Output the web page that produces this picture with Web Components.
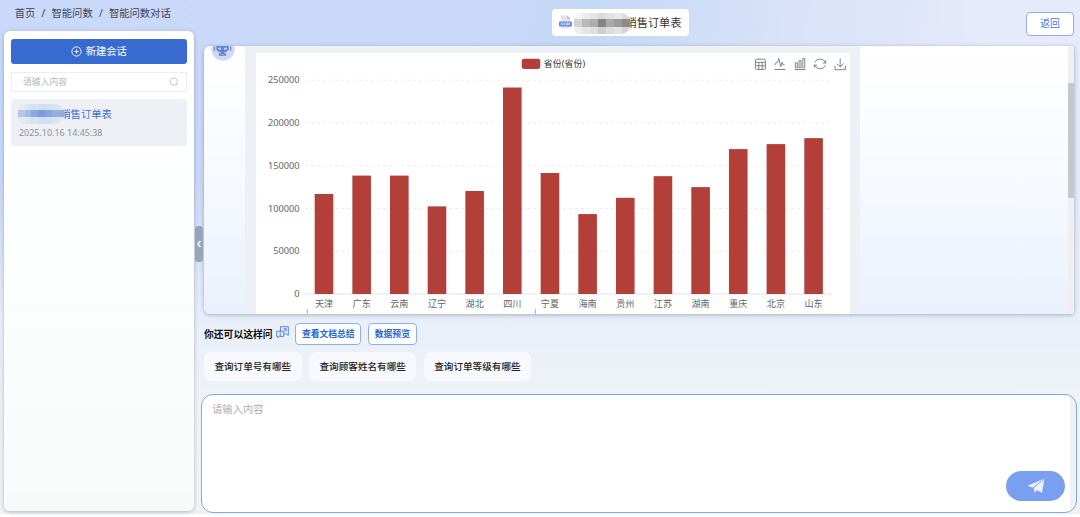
<!DOCTYPE html>
<html lang="zh-CN">
<head>
<meta charset="utf-8">
<title>智能问数对话</title>
<style>
  html, body {
    margin: 0;
    height: 100%;
    overflow: hidden;
    background: #fff;
  }
  body {
    font-family: "Noto Sans", "Noto Sans CJK SC", sans-serif;
    color: #333;
  }
</style>
</head>
<body>
<data-chat-app></data-chat-app>

<script>
const define = (name, html, setup) => {
  customElements.define(name, class extends HTMLElement {
    constructor() {
      super();
      this.root = this.attachShadow({ mode: 'open' });
      this.root.innerHTML = html;
    }

    connectedCallback() {
      if (setup) setup(this, this.root);
    }
  });
};

define('bread-crumb', `
  <style>
    :host {
      display: flex;
      gap: 6.2px;
      height: 31px;
      padding-left: 10.7px;
      box-sizing: border-box;
      font-size: 10.3px;
      line-height: 26px;
      white-space: nowrap;
      color: #3d4454;
    }
  </style>
  <span>首页</span><span>/</span><span>智能问数</span><span>/</span><span>智能问数对话</span>
`);

// Strip of grey or blue tiles that hides the customer's name
define('name-mask', `
  <style>
    :host {
      display: grid;
      grid-template-columns: repeat(7, 1fr);
      grid-template-rows: 1fr 1.1fr 1fr;
      border-radius: 5px 10px 10px 6px;
      overflow: hidden;
    }
  </style>
`, (host, root) => {
  const tones = {
    blue: ['#e5ebf4', '#dbe5f3', '#d5e0f2', '#d1ddf1', '#d4dff1', '#d9e3f2', '#dfe6f1',
           '#b3c9ec', '#9fbbe8', '#88a9e0', '#7b9fdd', '#85a6df', '#91afe2', '#92aee0',
           '#e5eaf2', '#dee6f2', '#d6e1f1', '#d4dff0', '#d3def0', '#dae3f1', '#e2e8f1'],
    grey: ['#f6f6f6', '#ececec', '#e5e5e5', '#dadada', '#e2e2e2', '#e9e9e9', '#dddddd',
           '#d2d2d2', '#b8b8b8', '#adadad', '#858585', '#a9a9a9', '#9b9b9b', '#8b8b8b',
           '#eeeeee', '#e4e4e4', '#dfdfdf', '#cfcfcf', '#dbdbdb', '#e3e3e3', '#d5d5d5']
  };
  tones[host.getAttribute('tone')].forEach(color => {
    const tile = document.createElement('i');
    tile.style.background = color;
    root.append(tile);
  });
});

define('session-item', `
  <style>
    :host {
      display: block;
      height: 47.5px;
      box-sizing: border-box;
      padding: 8px 7px 0;
      border-radius: 4px;
      background: #eef0f5;
    }
    .name {
      position: relative;
      height: 16px;
      padding-left: 42.3px;
      font-size: 10.3px;
      line-height: 15px;
      color: #376fd3;
      white-space: nowrap;
    }
    name-mask {
      position: absolute;
      left: 0;
      top: -3px;
      width: 47px;
      height: 20px;
    }
    .time {
      margin-top: 3px;
      padding-left: 1px;
      font-size: 8.95px;
      line-height: 13px;
      color: #8f9195;
    }
  </style>
  <div class="name">销售订单表<name-mask tone="blue"></name-mask></div>
  <div class="time"><slot></slot></div>
`);

define('session-panel', `
  <style>
    :host {
      display: flex;
      flex-direction: column;
      height: 480px;
      box-sizing: border-box;
      padding: 8px 7px;
      border-radius: 6px;
      background: linear-gradient(#fff, #fdfffe 35%, #f6fbfa);
      box-shadow: 0 1px 4px rgba(80, 90, 120, .4);
    }
    .create {
      display: flex;
      align-items: center;
      justify-content: center;
      gap: 3.5px;
      height: 25px;
      border-radius: 3px;
      background: #376bd0;
      color: #fff;
      font-size: 10.3px;
      line-height: 25px;
    }
    .search {
      display: flex;
      align-items: center;
      justify-content: space-between;
      height: 20px;
      box-sizing: border-box;
      margin: 7.5px 0 7px;
      padding: 0 7.5px 0 11px;
      border: 1px solid #eceef1;
      background: #fff;
      color: #b5b7bc;
      font-size: 8.8px;
    }
  </style>
  <div class="create">
    <svg width="11" height="11" viewBox="0 0 11 11" fill="none" stroke="#fff" stroke-width=".9">
      <circle cx="5.5" cy="5.5" r="4.6"/><path d="M5.5 3.5v4M3.5 5.5h4"/>
    </svg>
    <span>新建会话</span>
  </div>
  <div class="search">
    <span>请输入内容</span>
    <svg width="10" height="10" viewBox="0 0 10 10" fill="none" stroke="#babcc1" stroke-width=".8">
      <circle cx="4.8" cy="4.6" r="3.6"/><path d="M7.2 7.2l1.6 1.5"/>
    </svg>
  </div>
  <session-item>2025.10.16 14:45:38</session-item>
`);

define('chat-header', `
  <style>
    :host {
      display: flex;
      height: 46px;
      padding: 8.5px 0 0 348px;
      box-sizing: border-box;
      align-items: flex-start;
      justify-content: space-between;
    }
    .file {
      position: relative;
      display: flex;
      align-items: center;
      width: 136.5px;
      height: 27.8px;
      box-sizing: border-box;
      padding-left: 7px;
      border-radius: 4px;
      background: #fff;
      color: #333;
      font-size: 11.2px;
      white-space: nowrap;
    }
    .file span {
      margin-left: 53.5px;
    }
    name-mask {
      position: absolute;
      left: 22px;
      top: 4px;
      width: 56.5px;
      height: 21px;
    }
    .back {
      width: 48px;
      height: 24px;
      box-sizing: border-box;
      margin-top: 3.5px;
      border: 1px solid #8daeea;
      border-radius: 4px;
      background: #fff;
      color: #4678d4;
      font-size: 9.8px;
      line-height: 22.5px;
      text-align: center;
    }
  </style>
  <div class="file">
    <svg width="13" height="14" viewBox="0 0 13 14">
      <path d="M1.8.6h6.4l3.2 3.4v9.6H1.8z" fill="#e6e3e5"/>
      <path d="M8.2.6L11.4 4H8.2z" fill="#bdb9bd"/>
      <rect y="6.4" width="13" height="5" rx=".7" fill="#668af2"/>
      <path d="M2 7.8l1.5 2M3.5 7.8l-1.5 2M5 7.8v2h1.2M9.5 7.8l1.5 2M11 7.8l-1.5 2M8.5 7.8H7.3v1h1.1v1H7.2" fill="none" stroke="#fff" stroke-width=".75"/>
    </svg>
    <span>销售订单表</span>
    <name-mask tone="grey"></name-mask>
  </div>
  <div class="back">返回</div>
`);

define('bar-chart', `
  <style>
    :host {
      display: block;
      width: 594px;
      height: 261px;
      background: #fff;
    }
    svg {
      display: block;
    }
    text {
      font-size: 9.2px;
      fill: #666;
    }
    .legend {
      font-size: 8.9px;
      fill: #333;
    }
    .label {
      font-size: 9.1px;
      text-anchor: middle;
    }
    .tick {
      text-anchor: end;
    }
  </style>
  <svg width="594" height="261" viewBox="256 53 594 261">
    <g id="grid"></g>
    <g id="bars"></g>
    <rect x="521.7" y="58.7" width="18.6" height="10.4" rx="2.4" fill="#b34038"/>
    <text class="legend" x="543.7" y="66.5" textLength="41.5">省份(省份)</text>
    <path d="M307.2 309v5M535.4 309v5" stroke="#a3afc9"/>
    <g fill="none" stroke="#777" stroke-width=".9">
      <rect x="755.4" y="59.2" width="10" height="10.2" rx="1"/>
      <path d="M755.5 62.3h10M755.5 65.8h10M758.8 62.3v7M762.2 62.3v7"/>
      <path d="M774.8 65.3l1.3-2.7h1.4l1.3-4.1 2 8.2 1.3-4.5 1.3 2.8h1.3M774.5 69.5h11"/>
      <path d="M795.3 62.8h2v5h-2zM799 60.6h2v7.2h-2zM802.8 58.5h2v9.3h-2zM794.8 69.5h10.8"/>
      <path d="M814.7 62.4a5.8 5.8 0 0 1 10.8.5M825.5 65.4a5.8 5.8 0 0 1-10.8-.5M825.7 60.3v2.8h-2.7M814.3 67.9v-2.8h2.7"/>
      <path d="M840.2 58.3v8.5M836.8 63.6l3.4 3.3 3.4-3.3M835 66v3.7h10.4V66"/>
    </g>
  </svg>
`, (host, root) => {
  const baseline = 294;
  const unit = 42.75 / 50000;
  const data = [
    ['天津', 117000], ['广东', 138500], ['云南', 138500], ['辽宁', 102500],
    ['湖北', 120500], ['四川', 241500], ['宁夏', 141500], ['海南', 93500],
    ['贵州', 112500], ['江苏', 137800], ['湖南', 125000], ['重庆', 169500],
    ['北京', 175300], ['山东', 182300]
  ];

  let grid = '';
  for (let value = 0; value <= 250000; value += 50000) {
    const y = baseline - value * unit;
    const line = value ? 'stroke="#ececee" stroke-dasharray="3.3 2.7"' : 'stroke="#dfe0e4"';
    grid += `<path d="M305 ${y}H832" stroke-width=".9" ${line}/>
      <text class="tick" x="299.5" y="${y + 3.2}">${value}</text>`;
  }
  root.getElementById('grid').innerHTML = grid;

  root.getElementById('bars').innerHTML = data.map(([name, value], i) => {
    const x = 324 + i * 37.66;
    const height = value * unit;
    return `<rect x="${x - 9.3}" y="${baseline - height}" width="18.6" height="${height}" fill="#b34038"/>
      <text class="label" x="${x}" y="307">${name}</text>`;
  }).join('');
});

define('chat-log', `
  <style>
    :host {
      display: flex;
      height: 268px;
      border-radius: 6px 0 3px 6px;
      overflow: hidden;
      background: linear-gradient(#fff, #f8faff 45%, #eaf1fc);
    }
    .avatar {
      width: 41px;
      padding-left: 7px;
      box-sizing: border-box;
    }
    .avatar svg {
      display: block;
      margin-top: -9.5px;
    }
    .message {
      width: 615px;
      padding: 7px 0 0 11px;
      box-sizing: border-box;
      background: #edf1f6;
    }
    .track {
      width: 6.5px;
      margin-left: auto;
      background: #efeff0;
    }
    .thumb {
      height: 115px;
      margin-top: 36.5px;
      background: #c7c7c9;
    }
  </style>
  <div class="avatar">
    <svg width="24" height="24" viewBox="0 0 24 24">
      <circle cx="12" cy="12" r="11.7" fill="#cedbf3"/>
      <path d="M2.6 9.6h1.6v4.2H2.6zM18.8 9.6h1.6v4.2h-1.6z" fill="#7894db"/>
      <path d="M5.3 6h12.4v6.5l-2.3 2.6H7.6l-2.3-2.6z" fill="#6685da"/>
      <path d="M7.4 10.7h2.6v1.7H7.4zM13 10.7h2.6v1.7H13z" fill="#d4dff8"/>
      <path d="M9.8 15h3.6v1.2h1.8v2.6H7.8v-2.6h2z" fill="#607ed5"/>
      <path d="M9.8 17.4h3.6" stroke="#a9bcec" stroke-width=".8"/>
    </svg>
  </div>
  <div class="message"><bar-chart></bar-chart></div>
  <div class="track"><div class="thumb"></div></div>
`);

define('outline-button', `
  <style>
    :host {
      display: block;
      height: 22px;
      box-sizing: border-box;
      padding: 0 5.8px;
      border: 1px solid #8daeea;
      border-radius: 4px;
      background: #fff;
      color: #2c66d2;
      font-size: 8.8px;
      font-weight: 600;
      line-height: 20px;
      white-space: nowrap;
    }
  </style>
  <slot></slot>
`);

define('question-chip', `
  <style>
    :host {
      display: block;
      height: 29px;
      padding: 0 10.4px;
      border-radius: 7px;
      background: #f7f9fe;
      color: #222;
      font-size: 9.6px;
      font-weight: 500;
      line-height: 30px;
      white-space: nowrap;
    }
  </style>
  <slot></slot>
`);

define('suggest-bar', `
  <style>
    :host {
      display: block;
      height: 80px;
      padding-top: 9px;
      box-sizing: border-box;
    }
    .row {
      display: flex;
      align-items: center;
    }
    .title {
      font-size: 9.8px;
      font-weight: 700;
      color: #111;
      white-space: nowrap;
    }
    svg {
      margin: -3px 6px 0 3.5px;
    }
    outline-button + outline-button {
      margin-left: 6.5px;
    }
    .chips {
      gap: 7.6px;
      margin-top: 7px;
    }
  </style>
  <div class="row">
    <span class="title">你还可以这样问</span>
    <svg width="13" height="13" viewBox="0 0 13 13" fill="none" stroke="#4f80dc" stroke-width=".95">
      <path d="M4.5 5V.7h7.8v8.6L10.6 8H8"/>
      <path d="M.7 5.2h7v5.2H3.4L1.8 11.9v-1.5H.7zM7.5 2.7h2.7v2.6M10 2.9L7.7 5.2M4.2 5.2v5"/>
    </svg>
    <outline-button>查看文档总结</outline-button>
    <outline-button>数据预览</outline-button>
  </div>
  <div class="row chips">
    <question-chip>查询订单号有哪些</question-chip>
    <question-chip>查询顾客姓名有哪些</question-chip>
    <question-chip>查询订单等级有哪些</question-chip>
  </div>
`);

define('message-input', `
  <style>
    :host {
      display: flex;
      justify-content: space-between;
      height: 119px;
      box-sizing: border-box;
      margin: 0 -3px;
      border: 1px solid #83a6e4;
      border-radius: 12px;
      overflow: hidden;
      background: linear-gradient(90deg, #fff calc(100% - 6px), #f0f1f2 calc(100% - 6px));
    }
    .placeholder {
      padding: 7px 0 0 10px;
      font-size: 10.3px;
      line-height: 15px;
      color: #adadad;
    }
    .send {
      display: flex;
      align-items: center;
      justify-content: center;
      align-self: flex-end;
      width: 59px;
      height: 30px;
      margin: 0 11px 11px 0;
      border-radius: 15px;
      background: #799ff0;
    }
  </style>
  <div class="placeholder">请输入内容</div>
  <div class="send">
    <svg width="18" height="16" viewBox="0 0 18 16">
      <path d="M.5 7.8L17.5.5 6 9.7z" fill="#eaf2ff"/>
      <path d="M17.5.5L15 14.8l-5-2.6-2.6 3L6.6 10z" fill="#eaf2ff"/>
      <path d="M17.2.8L6.3 9.8l1.1 5" fill="none" stroke="#799ff0" stroke-width=".8"/>
    </svg>
  </div>
`);

define('data-chat-app', `
  <style>
    :host {
      position: relative;
      display: grid;
      grid-template-columns: 190px 870px;
      column-gap: 10px;
      width: 1080px;
      height: 514px;
      box-sizing: border-box;
      padding-left: 4px;
      background:
        linear-gradient(rgba(238, 242, 247, 0) 35%, #e9eff9 62%, #eff3f6 78%),
        linear-gradient(100deg, #cad9f9 0%, #cad8f8 40%, #c5d8f5 51%, #d7e1f8 66%, #e7eafb 86%, #e5eafb 100%);
    }
    .log {
      border-radius: 6px 0 3px 6px;
      box-shadow: 0 1px 4px rgba(80, 90, 120, .45);
    }
    .handle {
      position: absolute;
      left: 194.5px;
      top: 226px;
      width: 8.7px;
      height: 35.5px;
      border-radius: 3px;
      background: #98a5b9;
      display: flex;
      align-items: center;
      justify-content: center;
    }
  </style>
  <div>
    <bread-crumb></bread-crumb>
    <session-panel></session-panel>
  </div>
  <div>
    <chat-header></chat-header>
    <div class="log"><chat-log></chat-log></div>
    <suggest-bar></suggest-bar>
    <message-input></message-input>
  </div>
  <div class="handle">
    <svg width="6" height="8" viewBox="0 0 6 8" fill="none" stroke="#fff" stroke-width="1.3"><path d="M4.5 1L1.7 4l2.8 3"/></svg>
  </div>
`);
</script>
</body>
</html>
